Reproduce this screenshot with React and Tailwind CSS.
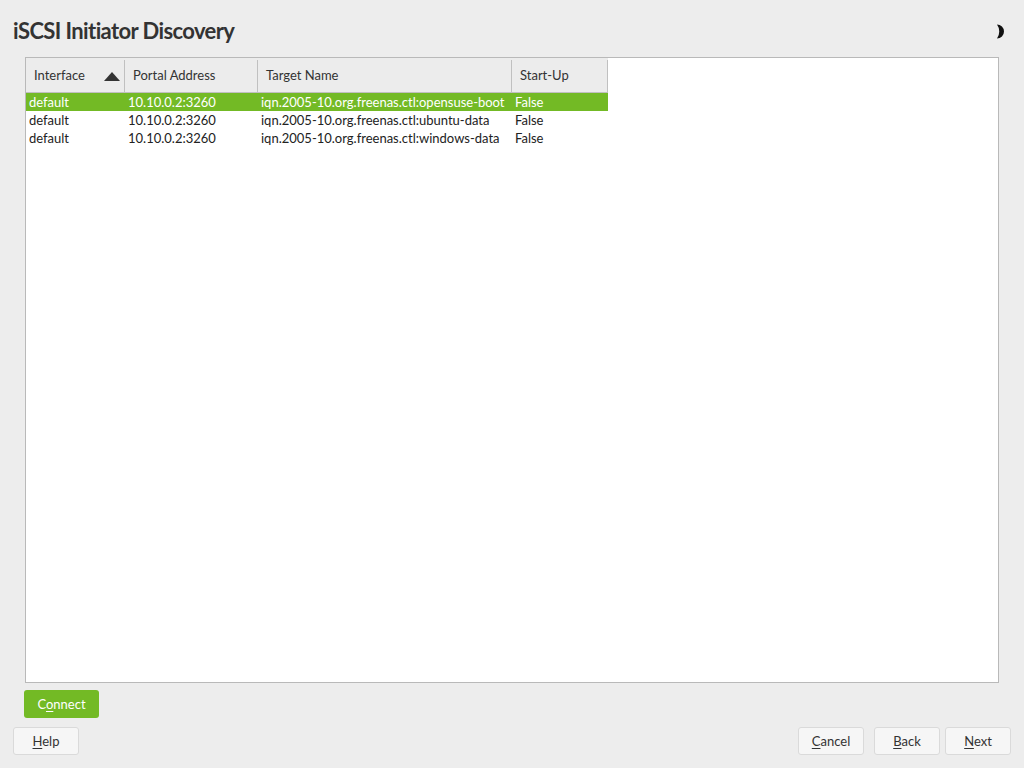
const rows = [
  { iface: "default", portal: "10.10.0.2:3260", target: "iqn.2005-10.org.freenas.ctl:opensuse-boot", startup: "False" },
  { iface: "default", portal: "10.10.0.2:3260", target: "iqn.2005-10.org.freenas.ctl:ubuntu-data", startup: "False" },
  { iface: "default", portal: "10.10.0.2:3260", target: "iqn.2005-10.org.freenas.ctl:windows-data", startup: "False" },
];

function Btn({ label, hot, className = "" }) {
  const i = label.indexOf(hot);
  return (
    <button
      className={`h-[28px] pt-[2px] rounded-[3px] border border-[#dadada] bg-[#f6f6f6] text-[13px] text-[#333] ${className}`}
    >
      {label.slice(0, i)}
      <span className="underline underline-offset-2">{hot}</span>
      {label.slice(i + 1)}
    </button>
  );
}

export default function App() {
  return (
    <div
      className="w-[1024px] h-[768px] bg-[#ededed] flex flex-col text-[#333]"
      style={{ fontFamily: "Lato, 'Open Sans', sans-serif" }}
    >
      {/* Title bar */}
      <div className="flex items-center justify-between h-[57px] pl-[13px] pr-[17px] pt-[3px]">
        <h1 className="text-[22px] font-bold text-[#333] tracking-[-0.6px]">
          iSCSI Initiator Discovery
        </h1>
        <svg width="12" height="15" viewBox="0 0 12 15" className="mt-[2px]">
          <path d="M2 0.5 A7 7 0 0 1 2 14.5 A12 12 0 0 0 2 0.5 Z" fill="#111" />
        </svg>
      </div>

      {/* Table */}
      <div className="mx-[25px] h-[626px] border border-[#b9b9b9] bg-white">
        <div className="flex h-[35px] pt-[2px] text-[13px] text-[#333] bg-[#ececec] w-[582px]">
          <div className="w-[99px] flex items-center justify-between pl-[8px] pr-[4px] border-r border-b border-[#c0c0c0]">
            <span>Interface</span>
            <svg width="16" height="9" viewBox="0 0 16 9">
              <path d="M0 9 L8 0 L16 9 Z" fill="#333" />
            </svg>
          </div>
          <div className="w-[133px] flex items-center pl-[8px] border-r border-b border-[#c0c0c0]">
            Portal Address
          </div>
          <div className="w-[254px] flex items-center pl-[8px] border-r border-b border-[#c0c0c0]">
            Target Name
          </div>
          <div className="w-[96px] flex items-center pl-[8px] border-r border-b border-[#c0c0c0]">
            Start-Up
          </div>
        </div>
        <div className="w-[582px] text-[13px]">
          {rows.map((r, idx) => (
            <div
              key={idx}
              className={`flex h-[18px] pt-[2px] items-center ${idx === 0 ? "bg-[#73ba25] text-white" : "text-[#222]"}`}
            >
              <div className="w-[99px] pl-[3px]">{r.iface}</div>
              <div className="w-[133px] pl-[3px]">{r.portal}</div>
              <div className="w-[254px] pl-[3px] whitespace-nowrap">{r.target}</div>
              <div className="w-[96px] pl-[3px]">{r.startup}</div>
            </div>
          ))}
        </div>
      </div>

      {/* Connect */}
      <div className="pl-[24px] pt-[7px]">
        <button className="h-[28px] w-[75px] pt-[2px] rounded-[3px] bg-[#73ba25] text-white text-[13px]">
          C<span className="underline underline-offset-2">o</span>nnect
        </button>
      </div>

      {/* Bottom buttons */}
      <div className="flex items-center justify-between pl-[13px] pr-[13px] pt-[9px]">
        <Btn label="Help" hot="H" className="w-[66px]" />
        <div className="flex gap-[10px]">
          <Btn label="Cancel" hot="C" className="w-[66px]" />
          <div className="flex gap-[5px]">
            <Btn label="Back" hot="B" className="w-[66px]" />
            <Btn label="Next" hot="N" className="w-[66px]" />
          </div>
        </div>
      </div>
    </div>
  );
}
